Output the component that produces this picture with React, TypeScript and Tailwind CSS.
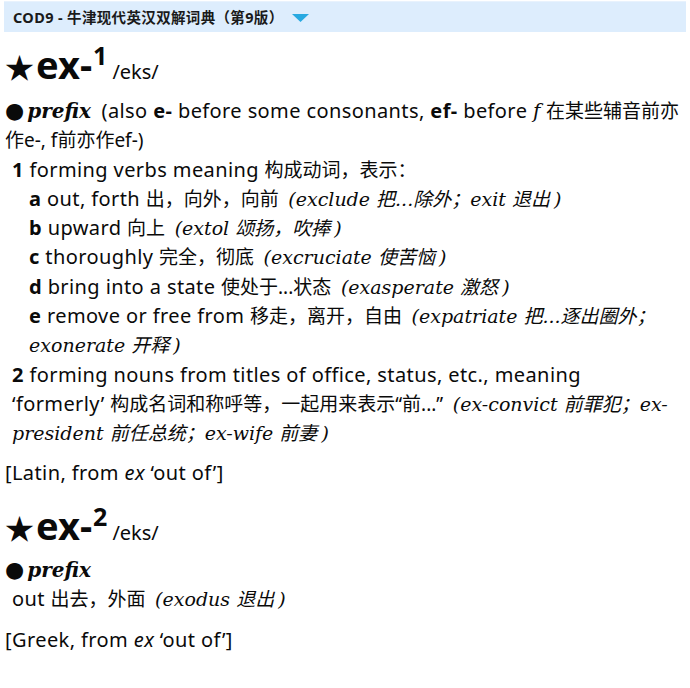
import React from 'react';

const sans = { fontFamily: '"Noto Sans", "Noto Sans CJK SC", sans-serif' };

function Zh({ children }: { children: React.ReactNode }) {
  return <span className="text-[19px] tracking-normal leading-none">{children}</span>;
}

function Ex({ children }: { children: React.ReactNode }) {
  return (
    <span className="italic font-['DejaVu_Serif','Noto_Sans_CJK_SC',serif] text-[19px] tracking-normal leading-none pl-[4px]">
      {children}
    </span>
  );
}

function Headword({ n }: { n: number }) {
  return (
    <div className="flex items-baseline pl-[5px] h-[48px] tracking-normal">
      <span className="text-[29px] leading-none font-['Noto_Sans_CJK_SC',sans-serif]">★</span>
      <span className="font-bold text-[38px] leading-none ml-[2px]">ex-</span>
      <span className="font-bold text-[25px] leading-none relative -top-[14px] ml-[1px]">{n}</span>
      <span className="text-[20px] leading-none ml-[5px]">/eks/</span>
    </div>
  );
}

function Pos() {
  return (
    <>
      <span className="text-[22px] leading-none tracking-normal font-['DejaVu_Sans',sans-serif]">●</span>
      <span className="italic font-bold font-['DejaVu_Serif',serif] text-[20px] leading-none tracking-normal ml-[3px] mr-[5px]">
        prefix
      </span>
    </>
  );
}

function Close() {
  return <span className="pl-[4px]">)</span>;
}

function Sub({ l, children }: { l: string; children: React.ReactNode }) {
  return (
    <div className="pl-[29px] pr-[4px]">
      <b>{l}</b> {children}
    </div>
  );
}

export default function App() {
  return (
    <div
      className="w-[690px] h-[688px] bg-white text-[#0a0a0a] text-[20px] leading-[29.3px] tracking-[0.4px] overflow-hidden"
      style={sans}
    >
      <div className="mx-[4px] mt-[1px] h-[31px] bg-[#ddedfd] border-t border-[#e8f2fd] flex items-center pl-[9px]">
        <span className="font-bold text-[14.5px] tracking-[0.35px] leading-none text-[#1a1a1a]">
          COD9 - 牛津现代英汉双解词典（第9版）
        </span>
        <svg width="17" height="8" viewBox="0 0 17 8" className="ml-[8px] mt-[2px]">
          <path d="M0 0 H17 L8.5 8 Z" fill="#28a9e1" />
        </svg>
      </div>

      <div className="mt-[13px]">
        <Headword n={1} />
      </div>

      <div className="pl-[5px] pr-[4px] mt-[3px]">
        <Pos /> (also <b>e-</b> before some consonants, <b>ef-</b> before{' '}
        <span className="italic font-['DejaVu_Serif',serif] leading-none tracking-normal">f</span>{' '}
        <Zh>在某些辅音前亦作e-, f前亦作ef-)</Zh>
      </div>

      <div className="pl-[12px] pr-[4px]">
        <b>1</b> forming verbs meaning <Zh>构成动词，表示：</Zh>
      </div>
      <Sub l="a">
        out, forth <Zh>出，向外，向前</Zh>{' '}
        <Ex>
          (exclude <Zh>把...除外；</Zh>exit <Zh>退出</Zh>
          <Close />
        </Ex>
      </Sub>
      <Sub l="b">
        upward <Zh>向上</Zh>{' '}
        <Ex>
          (extol <Zh>颂扬，吹捧</Zh>
          <Close />
        </Ex>
      </Sub>
      <Sub l="c">
        thoroughly <Zh>完全，彻底</Zh>{' '}
        <Ex>
          (excruciate <Zh>使苦恼</Zh>
          <Close />
        </Ex>
      </Sub>
      <Sub l="d">
        bring into a state <Zh>使处于...状态</Zh>{' '}
        <Ex>
          (exasperate <Zh>激怒</Zh>
          <Close />
        </Ex>
      </Sub>
      <Sub l="e">
        remove or free from <Zh>移走，离开，自由</Zh>{' '}
        <Ex>
          (expatriate <Zh>把...逐出圈外；</Zh>exonerate <Zh>开释</Zh>
          <Close />
        </Ex>
      </Sub>
      <div className="pl-[12px] pr-[4px]">
        <b>2</b> forming nouns from titles of office, status, etc., meaning
        <br />
        ‘formerly’ <Zh>构成名词和称呼等，一起用来表示“前...”</Zh>{' '}
        <Ex>
          (ex-convict <Zh>前罪犯；</Zh>ex-
          <br />
          president <Zh>前任总统；</Zh>ex-wife <Zh>前妻</Zh>
          <Close />
        </Ex>
      </div>

      <div className="pl-[5px] mt-[10px]">
        [Latin, from <i>ex</i> ‘out of’]
      </div>

      <div className="mt-[19px]">
        <Headword n={2} />
      </div>

      <div className="pl-[5px] mt-[1px]">
        <Pos />
      </div>
      <div className="pl-[12px]">
        out <Zh>出去，外面</Zh>{' '}
        <Ex>
          (exodus <Zh>退出</Zh>
          <Close />
        </Ex>
      </div>
      <div className="pl-[5px] mt-[12px]">
        [Greek, from <i>ex</i> ‘out of’]
      </div>
    </div>
  );
}
